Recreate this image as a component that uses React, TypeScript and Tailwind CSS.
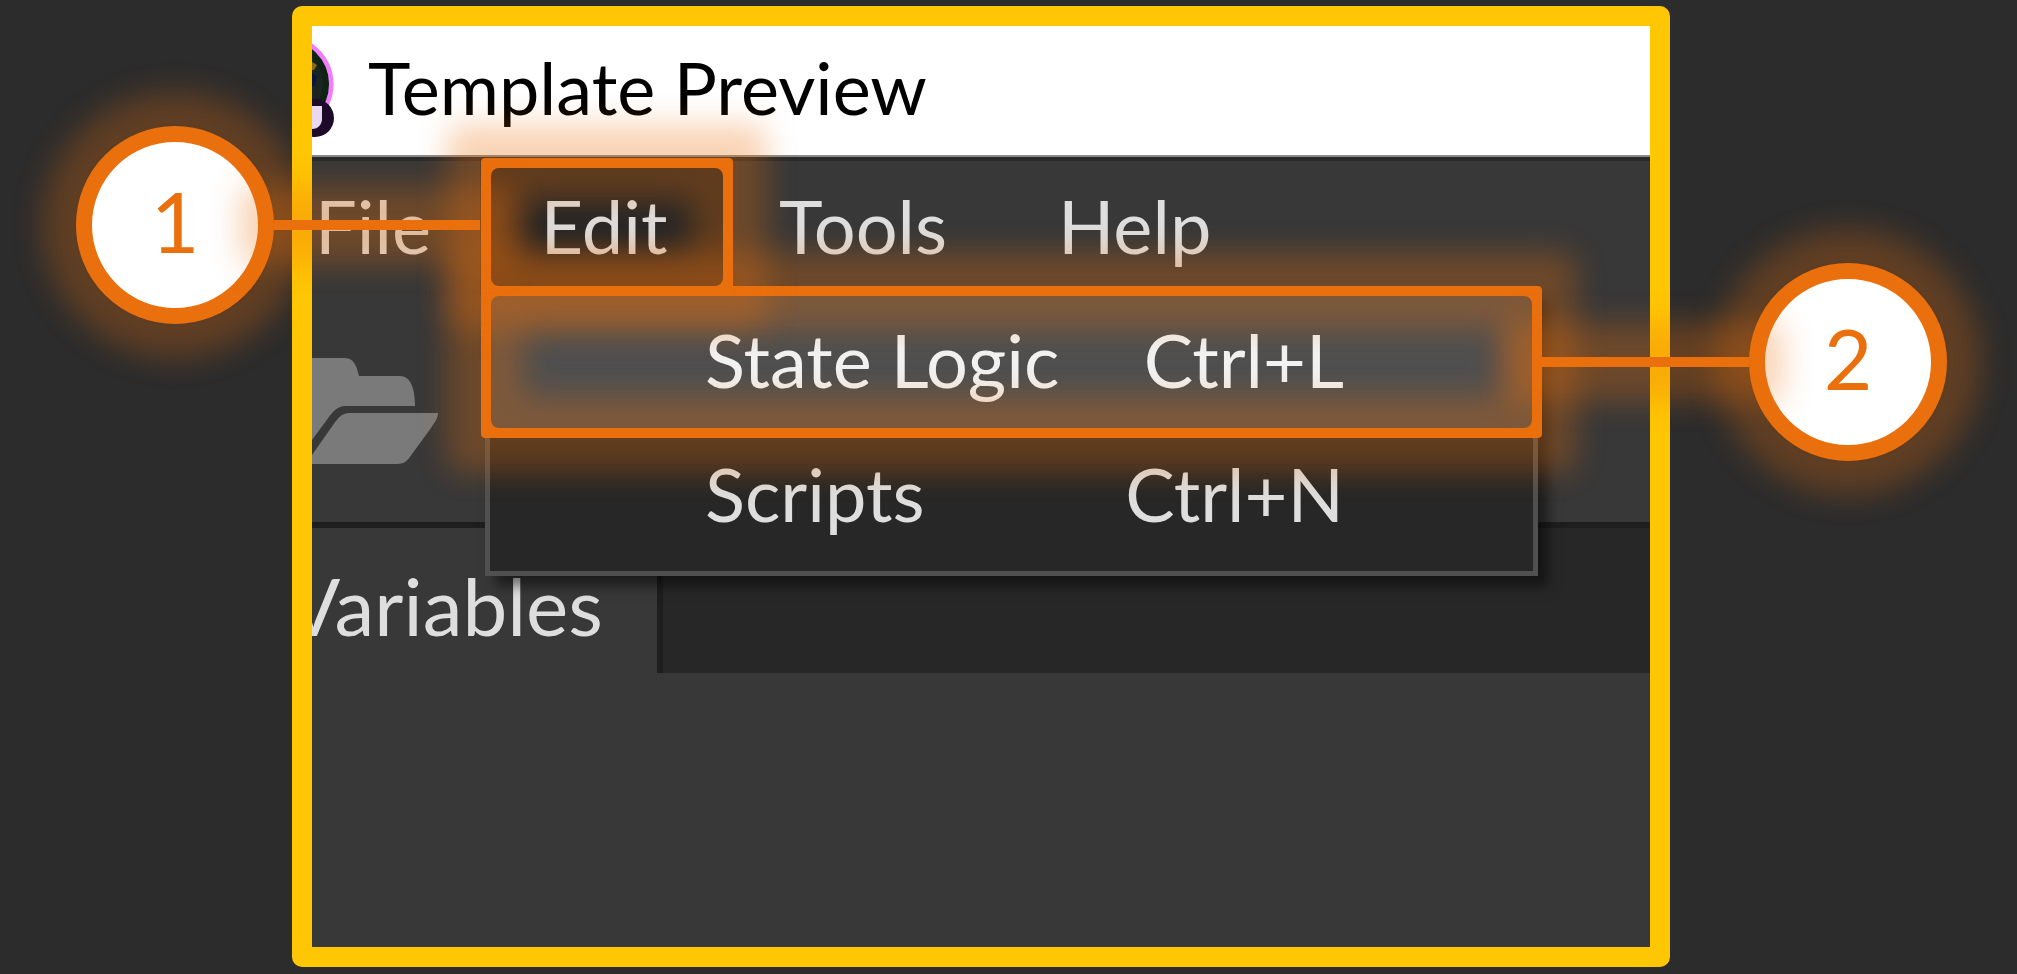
import type { ReactNode } from "react";

function AppLogo() {
  return (
    <svg className="h-[102px] w-6 shrink-0" viewBox="0 0 24 102" aria-hidden="true">
      <circle cx="-27" cy="44" r="46" fill="#1a2422" stroke="#f27bff" strokeWidth="5" />
      <circle cx="-27" cy="44" r="41" fill="none" stroke="#0c2410" strokeWidth="6" />
      <path d="M0 22 L5 25 L2 30 L0 30 Z" fill="#8a6a10" />
      <path d="M0 33 L5 36 L3 46 L0 46 Z" fill="#0a1440" />
      <circle cx="3" cy="78" r="19" fill="#1d0a28" />
      <path d="M0 66 H10 V80 C9 86 5 89 0 89 Z" fill="#ead9ee" />
    </svg>
  );
}

function FolderIcon() {
  return (
    <svg className="h-[112px] w-32" viewBox="0 0 128 112" fill="#7a7a7a" aria-hidden="true">
      <path d="M0 3 H33 C42 3 45 12 47 21 H88 C98 21 103 32 103 51 H34 C24 51 20 58 14 66 L0 85 Z" />
      <path d="M38 58 H126 C126 63 123 67 119 73 L100 99 C96 105 93 109 85 109 H0 V100 L21 70 C26 63 29 58 38 58 Z" />
    </svg>
  );
}

function Highlight({ inset }: { inset: string }) {
  return (
    <span
      className={`pointer-events-none absolute z-20 rounded-[4px] border-[10px] border-[#ea700d] shadow-[0_0_30px_34px_rgba(234,112,13,0.3),inset_0_0_30px_32px_rgba(234,112,13,0.3)] ${inset}`}
    >
      <span className="absolute -inset-1.5 rounded-[14px] border-[6px] border-[#ea700d]" />
    </span>
  );
}

function Callout({ label, connector }: { label: string; connector: string }) {
  return (
    <div className="relative size-[198px]">
      <div className="flex size-full items-center justify-center rounded-full border-[16px] border-[#ea700d] bg-white pb-2 text-[84px] leading-none text-[#ea700d] shadow-[0_0_30px_34px_rgba(234,112,13,0.28)]">
        {label}
      </div>
      <span
        className={`absolute top-[94px] z-30 h-[10px] bg-[#ea700d] shadow-[0_0_30px_34px_rgba(234,112,13,0.3)] ${connector}`}
      />
    </div>
  );
}

function MenuItem({ name, keys, active, children }: { name: string; keys: string; active?: boolean; children?: ReactNode }) {
  return (
    <li className="relative">
      <button
        type="button"
        className={`flex h-[134px] w-full items-center justify-between pr-[189px] pb-1 pl-[215px] ${
          active ? "bg-[#4f4f4f] text-[#f2f2f2]" : "text-[#dedede]"
        }`}
      >
        <span>{name}</span>
        <kbd className="font-[Lato,sans-serif]">{keys}</kbd>
      </button>
      {children}
    </li>
  );
}

export default function App() {
  return (
    <div className="flex min-h-screen overflow-hidden bg-[#2c2c2c] pt-[6px] pb-[7px] font-[Lato,'Open_Sans',sans-serif]">
      <aside className="w-[292px] shrink-0 pt-[120px] pl-[76px]">
        <Callout label="1" connector="left-full w-[206px]" />
      </aside>

      <main className="relative flex min-w-0 flex-1 flex-col rounded-[10px] border-[20px] border-[#ffc604] bg-[#383838] text-[74px] leading-none text-[#dedede]">
        <div className="flex flex-1 flex-col overflow-hidden">
          <header className="flex h-[131px] shrink-0 items-center gap-8 border-b-2 border-[#8a8a8a] bg-white text-black">
            <AppLogo />
            <h1 className="-mt-2 whitespace-nowrap text-[72px] leading-tight">Template Preview</h1>
          </header>

          <nav className="flex h-[138px] shrink-0 border-t-4 border-[#2a2a2a]">
            <button type="button" className="w-[168px] pb-1 pl-[3px] text-left">
              File
            </button>
            <div className="relative w-[252px]">
              <button type="button" className="size-full bg-[#262626] pr-1 pb-1">
                Edit
              </button>
              <ul className="absolute top-[129px] left-[5px] z-10 w-[1053px] border-[5px] border-[#505050] bg-[#272727] pb-2 shadow-[10px_10px_12px_rgba(0,0,0,0.5)]">
                <MenuItem name="State Logic" keys="Ctrl+L" active>
                  <Highlight inset="-inset-x-[9px] -inset-y-[9px]" />
                </MenuItem>
                <MenuItem name="Scripts" keys="Ctrl+N" />
              </ul>
              <Highlight inset="left-px -right-px -top-[3px] -bottom-px" />
            </div>
            <button type="button" className="w-[281px] pb-1 pl-[47px] text-left">
              Tools
            </button>
            <button type="button" className="pb-1 pl-[45px] text-left">
              Help
            </button>
          </nav>

          <div className="h-[227px] shrink-0 pt-[60px]">
            <button type="button" aria-label="Open">
              <FolderIcon />
            </button>
          </div>

          <div className="flex h-[151px] shrink-0 border-t-[6px] border-[#1e1e1e] bg-[#272727]">
            <button type="button" className="flex w-[351px] items-center justify-end border-r-[6px] border-[#1e1e1e] bg-[#383838] pt-2 pr-[54px] text-[80px]">
              Variables
            </button>
          </div>
        </div>
      </main>

      <aside className="w-[347px] shrink-0 pt-[257px] pl-[79px]">
        <Callout label="2" connector="right-full w-[208px]" />
      </aside>
    </div>
  );
}
